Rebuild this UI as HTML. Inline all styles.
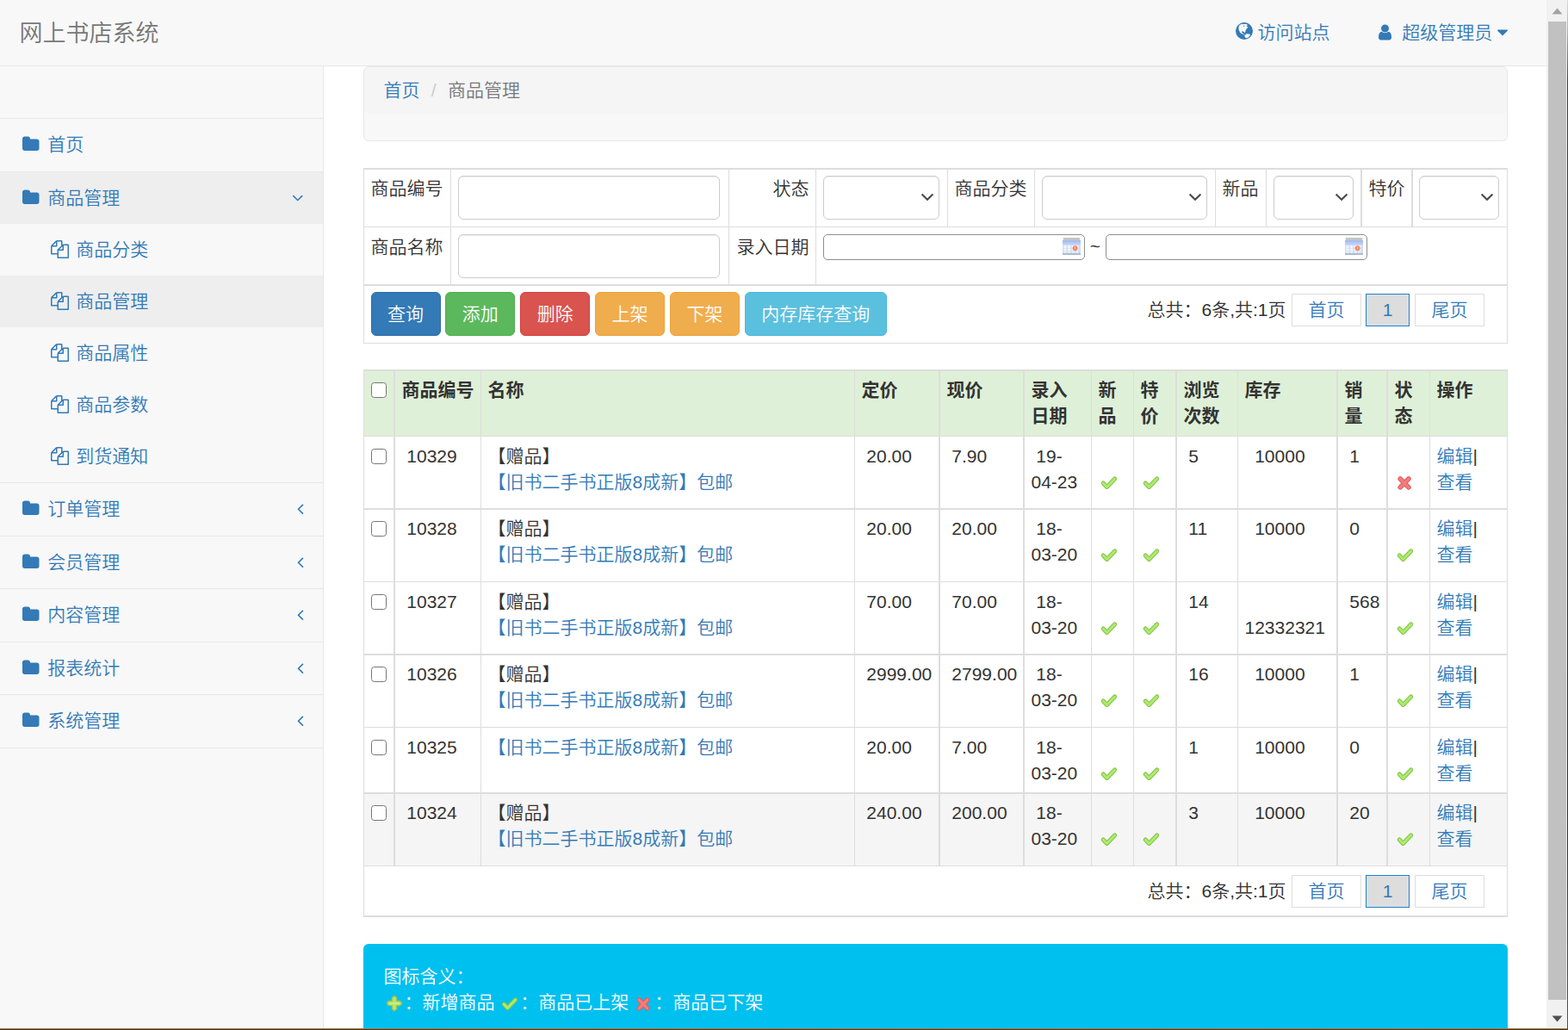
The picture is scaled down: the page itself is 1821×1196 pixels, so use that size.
<!DOCTYPE html>
<html lang="zh-CN">
<head>
<meta charset="utf-8">
<title>网上书店系统</title>
<style>
*{box-sizing:border-box}
html,body{margin:0;padding:0}
body{width:1821px;height:1196px;overflow:hidden;position:relative;background:#fff;
 font-family:"Liberation Sans","Noto Sans CJK SC",sans-serif;font-weight:350}
#vp{position:absolute;left:0;top:0;width:1796px;height:1194px;overflow:hidden;background:#fff}
#z{zoom:1.5;width:1197.3333px;position:relative;font-size:14px;line-height:20px;color:#333;--d:0.6666667px}
a{color:#337ab7;text-decoration:none}
svg.fa{display:inline-block;vertical-align:-2px}
.fw{display:inline-block;width:18px;text-align:center}
/* scrollbar + edges */
#sb{position:absolute;left:1796px;top:0;width:24px;height:1194px;background:#f1f1f1}
#sb .th{position:absolute;left:2px;top:25px;width:21px;height:1136px;background:#c1c1c1}
#sb svg{position:absolute;left:0}
#edgeR{position:absolute;left:1820px;top:0;width:1px;height:1196px;background:linear-gradient(#c9dcec 0,#8fb6d6 3%,#3d3a3a 8%,#2a2522 50%,#3a2a1a 80%,#7a4a12 100%)}
#edgeB{position:absolute;left:0;top:1194px;width:1821px;height:2px;background:linear-gradient(#b9a58a 0,#5d3a0e 60%,#4a2c08 100%)}
/* navbar */
#nav{height:51px;background:#f8f8f8;position:relative}
#navb{position:absolute;left:0;top:76px;width:1796px;height:1px;background:#e7e7e7}
#brand{position:absolute;left:15px;top:15.667px;font-size:18px;line-height:20px;color:#777}
#toplinks{position:absolute;right:15px;top:0;margin:0;padding:0;list-style:none;white-space:nowrap}
#toplinks li{display:inline-block;vertical-align:top}
#toplinks a{display:block;padding:15px;min-height:50px;line-height:20px}
/* sidebar */
#side{position:absolute;left:0;top:51px;width:250px;background:#f8f8f8;height:760px}
#side ul{list-style:none;margin:0;padding:0}
#side>ul>li{height:41px;position:relative}
#side>ul>li.act{height:241px}
#side>ul>li:after{content:'';position:absolute;left:0;right:0;bottom:0;height:0.667px;background:#e7e7e7}
#side a{display:block;padding:10px 15px;position:relative}
#side li.search{height:41px;padding:0}
#side .act>a,#side a.cur{background:#eee}
#side ul ul a{padding-left:37px}
#side .arrow{float:right}
/* page (z container only paints the white bg) */
#page{margin-left:250px;padding:0 30px;background:#fff;min-height:760px}
#sideb{position:absolute;left:375px;top:77px;width:1px;height:1120px;background:#e7e7e7}
/* device-pixel layer */
#pg{position:absolute;left:0;top:0;width:1796px;height:1194px;overflow:hidden;font-size:21px;line-height:30px;color:#333}
#pg a{color:#337ab7}
#crumbbox{position:absolute;left:422px;top:77px;width:1329px;height:87px;border:1px solid #e7e7e7;background:#f8f8f8;border-radius:6px}
#crumb{margin:0;padding:12px 22.5px;height:54px;list-style:none;background:#f5f5f5;border-radius:5px}
#crumb li{display:inline-block}
#crumb li+li:before{content:"/\00a0";padding:0 7.5px;color:#ccc}
#crumb .on{color:#777}
#pg table{position:absolute;left:422px;border-collapse:separate;border-spacing:0;table-layout:fixed;width:1329px}
#pg td,#pg th{border:0 solid #ddd;padding:7.5px 7.5px 0;vertical-align:top;text-align:left;font-weight:inherit;white-space:nowrap}
/* filter */
#flt{top:195px}
#flt td.r{text-align:right}
.ipt{display:inline-block;height:51px;border:1px solid #ccc;border-radius:6px;background:#fff;box-shadow:inset 0 1px 1px rgba(0,0,0,.075);vertical-align:top}
.sel{position:relative}
.sel svg{position:absolute;right:5px;top:19px}
.wdate{display:inline-block;height:30px;width:304px;border:1px solid #8e8e8e;border-radius:5px;background:#fff;vertical-align:top;position:relative}
.wdate svg{position:absolute;right:4px;top:3px}
.btn{display:inline-block;height:51px;padding:9.5px 18.5px;border:1px solid transparent;border-radius:6px;color:#fff;line-height:30px;vertical-align:top}
.b1{background:#337ab7;border-color:#2e6da4}.b2{background:#5cb85c;border-color:#4cae4c}.b3{background:#d9534f;border-color:#d43f3a}
.b4{background:#f0ad4e;border-color:#eea236}.b5{background:#5bc0de;border-color:#46b8da}
.pager{float:right;margin-right:18.5px;margin-top:2px;white-space:nowrap;font-size:0}
.pager span.t{display:inline-block;vertical-align:top;line-height:37px;font-size:21px;margin-right:6.5px}
.pager a{display:inline-block;vertical-align:top;height:38px;line-height:36px;border:1px solid #ddd;width:81px;text-align:center;background:#fff;font-size:21px}
.pager a.on{background:#ddd;border-color:#1e82d2;width:51px;margin:0 6px 0 5px}
/* main table */
#main{top:429px}
#main th{background:#dff0d8;font-weight:bold}
#main tr.hov td{background:#f5f5f5}
.cb{display:inline-block;width:18px;height:18px;border:1.3px solid #767676;border-radius:3.5px;background:#fff;margin:6px 0 0 0.5px;vertical-align:top}
.ic{display:inline-block;vertical-align:-5px}
/* alert */
.alert{position:absolute;left:422px;top:1095.5px;background:#00c0ef;border-radius:6px;color:#fff;padding:23px 23.5px;height:180px;width:1329px}
.alert .ic{vertical-align:-6px}

</style>
</head>
<body>
<div id="vp"><div id="z">

<div id="nav">
  <div id="brand">网上书店系统</div>
  <ul id="toplinks">
    <li><a><svg class="fa" width="13.3333" height="13.3333" viewBox="128 128 1536 1536" style="vertical-align:-0.7px;margin-left:-1.55px;margin-right:0.05px"><circle cx="896" cy="896" r="768" fill="currentColor"/><polygon fill="#f8f8f8" stroke="#f8f8f8" stroke-width="14" stroke-linejoin="round" points="478,362 676,290 1120,290 1180,376 1093,480 1243,572 1104,676 1012,861 965,1046 861,977 722,931 653,1000 815,1139 954,1278 861,1231 561,1069 422,815 399,584"/><polygon fill="#f8f8f8" stroke="#f8f8f8" stroke-width="14" stroke-linejoin="round" points="954,1278 1093,1150 1310,1170 1440,1215 1350,1385 1185,1510 1056,1510 941,1406"/><circle cx="870" cy="450" r="50" fill="currentColor"/><circle cx="745" cy="975" r="50" fill="currentColor"/></svg> 访问站点</a></li>
    <li><a><span class="fw"><svg class="fa" width="10.000" height="14" viewBox="256 0 1280 1792" style=""><path fill="currentColor" d="M1536 1399q0 109-62.5 187t-150.5 78h-854q-88 0-150.5-78t-62.5-187q0-85 8.500-160.500t31.500-152 58.500-131 94-89 134.500-34.500q131 128 313 128t313-128q76 0 134.500 34.500t94 89 58.500 131 31.500 152 8.500 160.500zm-256-887q0 159-112.500 271.500t-271.500 112.500-271.500-112.500-112.500-271.500 112.500-271.500 271.500-112.500 271.500 112.500 112.500 271.500z"/></svg></span> 超级管理员 <svg class="fa" width="8.000" height="14" viewBox="384 0 1024 1792" style=""><path fill="currentColor" d="M1408 704q0 26-19 45l-448 448q-19 19-45 19t-45-19l-448-448q-19-19-19-45t19-45 45-19h896q26 0 45 19t19 45z"/></svg></a></li>
  </ul>
</div>

<div id="side">
<ul>
  <li class="search"></li>
  <li><a><span class="fw"><svg class="fa" width="13.000" height="14" viewBox="64 0 1664 1792" style=""><path fill="currentColor" d="M1728 608v704q0 92-66 158t-158 66h-1216q-92 0-158-66t-66-158v-960q0-92 66-158t158-66h320q92 0 158 66t66 158v32h672q92 0 158 66t66 158z"/></svg></span> 首页</a></li>
  <li class="act"><a><span class="fw"><svg class="fa" width="13.000" height="14" viewBox="64 0 1664 1792" style=""><path fill="currentColor" d="M1728 608v704q0 92-66 158t-158 66h-1216q-92 0-158-66t-66-158v-960q0-92 66-158t158-66h320q92 0 158 66t66 158v32h672q92 0 158 66t66 158z"/></svg></span> 商品管理<span class="arrow"><svg class="fa" width="9.000" height="14" viewBox="320 0 1152 1792" style=""><path fill="currentColor" d="M1395 736q0 13-10 23l-466 466q-10 10-23 10t-23-10l-466-466q-10-10-10-23t10-23l50-50q10-10 23-10t23 10l393 393 393-393q10-10 23-10t23 10l50 50q10 10 10 23z"/></svg></span></a>
    <ul>
      <li><a><span class="fw"><svg class="fa" width="14.000" height="14" viewBox="0 0 1792 1792" style=""><path fill="currentColor" d="M1696 384q40 0 68 28t28 68v1216q0 40-28 68t-68 28h-960q-40 0-68-28t-28-68v-288h-544q-40 0-68-28t-28-68v-672q0-40 20-88t48-76l408-408q28-28 76-48t88-20h416q40 0 68 28t28 68v328q68-40 128-40h416zm-544 213l-299 299h299v-299zm-640-384l-299 299h299v-299zm196 647l316-316v-416h-384v416q0 40-28 68t-68 28h-416v640h512v-256q0-40 20-88t48-76zm956 804v-1152h-384v416q0 40-28 68t-68 28h-416v640h896z"/></svg></span> 商品分类</a></li>
      <li><a class="cur"><span class="fw"><svg class="fa" width="14.000" height="14" viewBox="0 0 1792 1792" style=""><path fill="currentColor" d="M1696 384q40 0 68 28t28 68v1216q0 40-28 68t-68 28h-960q-40 0-68-28t-28-68v-288h-544q-40 0-68-28t-28-68v-672q0-40 20-88t48-76l408-408q28-28 76-48t88-20h416q40 0 68 28t28 68v328q68-40 128-40h416zm-544 213l-299 299h299v-299zm-640-384l-299 299h299v-299zm196 647l316-316v-416h-384v416q0 40-28 68t-68 28h-416v640h512v-256q0-40 20-88t48-76zm956 804v-1152h-384v416q0 40-28 68t-68 28h-416v640h896z"/></svg></span> 商品管理</a></li>
      <li><a><span class="fw"><svg class="fa" width="14.000" height="14" viewBox="0 0 1792 1792" style=""><path fill="currentColor" d="M1696 384q40 0 68 28t28 68v1216q0 40-28 68t-68 28h-960q-40 0-68-28t-28-68v-288h-544q-40 0-68-28t-28-68v-672q0-40 20-88t48-76l408-408q28-28 76-48t88-20h416q40 0 68 28t28 68v328q68-40 128-40h416zm-544 213l-299 299h299v-299zm-640-384l-299 299h299v-299zm196 647l316-316v-416h-384v416q0 40-28 68t-68 28h-416v640h512v-256q0-40 20-88t48-76zm956 804v-1152h-384v416q0 40-28 68t-68 28h-416v640h896z"/></svg></span> 商品属性</a></li>
      <li><a><span class="fw"><svg class="fa" width="14.000" height="14" viewBox="0 0 1792 1792" style=""><path fill="currentColor" d="M1696 384q40 0 68 28t28 68v1216q0 40-28 68t-68 28h-960q-40 0-68-28t-28-68v-288h-544q-40 0-68-28t-28-68v-672q0-40 20-88t48-76l408-408q28-28 76-48t88-20h416q40 0 68 28t28 68v328q68-40 128-40h416zm-544 213l-299 299h299v-299zm-640-384l-299 299h299v-299zm196 647l316-316v-416h-384v416q0 40-28 68t-68 28h-416v640h512v-256q0-40 20-88t48-76zm956 804v-1152h-384v416q0 40-28 68t-68 28h-416v640h896z"/></svg></span> 商品参数</a></li>
      <li><a><span class="fw"><svg class="fa" width="14.000" height="14" viewBox="0 0 1792 1792" style=""><path fill="currentColor" d="M1696 384q40 0 68 28t28 68v1216q0 40-28 68t-68 28h-960q-40 0-68-28t-28-68v-288h-544q-40 0-68-28t-28-68v-672q0-40 20-88t48-76l408-408q28-28 76-48t88-20h416q40 0 68 28t28 68v328q68-40 128-40h416zm-544 213l-299 299h299v-299zm-640-384l-299 299h299v-299zm196 647l316-316v-416h-384v416q0 40-28 68t-68 28h-416v640h512v-256q0-40 20-88t48-76zm956 804v-1152h-384v416q0 40-28 68t-68 28h-416v640h896z"/></svg></span> 到货通知</a></li>
    </ul>
  </li>
  <li><a><span class="fw"><svg class="fa" width="13.000" height="14" viewBox="64 0 1664 1792" style=""><path fill="currentColor" d="M1728 608v704q0 92-66 158t-158 66h-1216q-92 0-158-66t-66-158v-960q0-92 66-158t158-66h320q92 0 158 66t66 158v32h672q92 0 158 66t66 158z"/></svg></span> 订单管理<span class="arrow"><svg class="fa" width="5.000" height="14" viewBox="576 0 640 1792" style=""><path fill="currentColor" d="M1203 544q0 13-10 23l-393 393 393 393q10 10 10 23t-10 23l-50 50q-10 10-23 10t-23-10l-466-466q-10-10-10-23t10-23l466-466q10-10 23-10t23 10l50 50q10 10 10 23z"/></svg></span></a></li>
  <li><a><span class="fw"><svg class="fa" width="13.000" height="14" viewBox="64 0 1664 1792" style=""><path fill="currentColor" d="M1728 608v704q0 92-66 158t-158 66h-1216q-92 0-158-66t-66-158v-960q0-92 66-158t158-66h320q92 0 158 66t66 158v32h672q92 0 158 66t66 158z"/></svg></span> 会员管理<span class="arrow"><svg class="fa" width="5.000" height="14" viewBox="576 0 640 1792" style=""><path fill="currentColor" d="M1203 544q0 13-10 23l-393 393 393 393q10 10 10 23t-10 23l-50 50q-10 10-23 10t-23-10l-466-466q-10-10-10-23t10-23l466-466q10-10 23-10t23 10l50 50q10 10 10 23z"/></svg></span></a></li>
  <li><a><span class="fw"><svg class="fa" width="13.000" height="14" viewBox="64 0 1664 1792" style=""><path fill="currentColor" d="M1728 608v704q0 92-66 158t-158 66h-1216q-92 0-158-66t-66-158v-960q0-92 66-158t158-66h320q92 0 158 66t66 158v32h672q92 0 158 66t66 158z"/></svg></span> 内容管理<span class="arrow"><svg class="fa" width="5.000" height="14" viewBox="576 0 640 1792" style=""><path fill="currentColor" d="M1203 544q0 13-10 23l-393 393 393 393q10 10 10 23t-10 23l-50 50q-10 10-23 10t-23-10l-466-466q-10-10-10-23t10-23l466-466q10-10 23-10t23 10l50 50q10 10 10 23z"/></svg></span></a></li>
  <li><a><span class="fw"><svg class="fa" width="13.000" height="14" viewBox="64 0 1664 1792" style=""><path fill="currentColor" d="M1728 608v704q0 92-66 158t-158 66h-1216q-92 0-158-66t-66-158v-960q0-92 66-158t158-66h320q92 0 158 66t66 158v32h672q92 0 158 66t66 158z"/></svg></span> 报表统计<span class="arrow"><svg class="fa" width="5.000" height="14" viewBox="576 0 640 1792" style=""><path fill="currentColor" d="M1203 544q0 13-10 23l-393 393 393 393q10 10 10 23t-10 23l-50 50q-10 10-23 10t-23-10l-466-466q-10-10-10-23t10-23l466-466q10-10 23-10t23 10l50 50q10 10 10 23z"/></svg></span></a></li>
  <li><a><span class="fw"><svg class="fa" width="13.000" height="14" viewBox="64 0 1664 1792" style=""><path fill="currentColor" d="M1728 608v704q0 92-66 158t-158 66h-1216q-92 0-158-66t-66-158v-960q0-92 66-158t158-66h320q92 0 158 66t66 158v32h672q92 0 158 66t66 158z"/></svg></span> 系统管理<span class="arrow"><svg class="fa" width="5.000" height="14" viewBox="576 0 640 1792" style=""><path fill="currentColor" d="M1203 544q0 13-10 23l-393 393 393 393q10 10 10 23t-10 23l-50 50q-10 10-23 10t-23-10l-466-466q-10-10-10-23t10-23l466-466q10-10 23-10t23 10l50 50q10 10 10 23z"/></svg></span></a></li>
</ul>
</div>

<div id="page"></div>
</div></div>
<div id="sideb"></div><div id="navb"></div>

<div id="pg">
  <div id="crumbbox"><ol id="crumb"><li><a>首页</a></li> <li class="on">商品管理</li></ol></div>

  <table id="flt">
    <colgroup><col style="width:101px"><col style="width:323px"><col style="width:101px"><col style="width:153px"><col style="width:101px"><col style="width:210px"><col style="width:59px"><col style="width:110px"><col style="width:59px"><col style="width:112px"></colgroup>
    <tr style="height:68px">
      <td style="border-top-width:2px;border-left-width:1px;padding-top:7px;padding-left:7.5px;">商品编号</td><td style="border-top-width:2px;border-left-width:1px;padding-top:7px;padding-left:8px;"><span class="ipt" style="width:304px"></span></td>
      <td class="r" style="border-top-width:2px;border-left-width:1px;padding-top:7px;padding-left:7.5px;">状态</td><td style="border-top-width:2px;border-left-width:1px;padding-top:7px;padding-left:8px;"><span class="ipt sel" style="width:135px;margin-left:0px"><svg width="16" height="10" viewBox="0 0 16 10"><path d="M1.6 1.4 L8 7.8 L14.4 1.4" fill="none" stroke="#4a4a4a" stroke-width="2.1"/></svg></span></td>
      <td style="border-top-width:2px;border-left-width:1px;padding-top:7px;padding-left:7.5px;">商品分类</td><td style="border-top-width:2px;border-left-width:1px;padding-top:7px;padding-left:8px;"><span class="ipt sel" style="width:192px;margin-left:0px"><svg width="16" height="10" viewBox="0 0 16 10"><path d="M1.6 1.4 L8 7.8 L14.4 1.4" fill="none" stroke="#4a4a4a" stroke-width="2.1"/></svg></span></td>
      <td style="border-top-width:2px;border-left-width:1px;padding-top:7px;padding-left:7.5px;">新品</td><td style="border-top-width:2px;border-left-width:1px;padding-top:7px;padding-left:8px;"><span class="ipt sel" style="width:93px;margin-left:0px"><svg width="16" height="10" viewBox="0 0 16 10"><path d="M1.6 1.4 L8 7.8 L14.4 1.4" fill="none" stroke="#4a4a4a" stroke-width="2.1"/></svg></span></td>
      <td style="border-top-width:2px;border-left-width:2px;padding-top:7px;padding-left:7.5px;">特价</td><td style="border-top-width:2px;border-left-width:2px;padding-top:7px;padding-left:7px;border-right-width:1px;"><span class="ipt sel" style="width:93px;margin-left:0px"><svg width="16" height="10" viewBox="0 0 16 10"><path d="M1.6 1.4 L8 7.8 L14.4 1.4" fill="none" stroke="#4a4a4a" stroke-width="2.1"/></svg></span></td>
    </tr>
    <tr style="height:67px">
      <td style="border-top-width:1px;border-left-width:1px;padding-top:7.5px;padding-left:7.5px;">商品名称</td><td style="border-top-width:1px;border-left-width:1px;padding-top:8px;padding-left:8px;"><span class="ipt" style="width:304px"></span></td>
      <td class="r" style="border-top-width:1px;border-left-width:1px;padding-top:7.5px;padding-left:7.5px;">录入日期</td><td colspan="7" style="border-top-width:1px;border-left-width:1px;padding-top:8px;padding-left:8px;border-right-width:1px;"><span class="wdate"><svg width="21" height="20" viewBox="0 0 21 20"><rect x="0.8" y="0" width="19.4" height="3.2" fill="#c3c5c9"/><rect x="0" y="3" width="21" height="5.5" fill="#a9bdf0"/><rect x="0" y="5.5" width="21" height="3" fill="#bccdf5"/><rect x="0" y="8.2" width="21" height="10" fill="#d3dff1"/><rect x="1.5" y="9.2" width="3" height="2.6" fill="#f4f8fd"/><rect x="6.1" y="9.2" width="3" height="2.6" fill="#f4f8fd"/><rect x="10.7" y="9.2" width="3" height="2.6" fill="#f4f8fd"/><rect x="15.3" y="9.2" width="3" height="2.6" fill="#f4f8fd"/><rect x="1.5" y="12.7" width="3" height="2.6" fill="#f4f8fd"/><rect x="6.1" y="12.7" width="3" height="2.6" fill="#f4f8fd"/><rect x="10.7" y="12.7" width="3" height="2.6" fill="#f4f8fd"/><rect x="15.3" y="12.7" width="3" height="2.6" fill="#f4f8fd"/><rect x="1.5" y="16.2" width="3" height="2.6" fill="#f4f8fd"/><rect x="6.1" y="16.2" width="3" height="2.6" fill="#f4f8fd"/><rect x="10.7" y="16.2" width="3" height="2.6" fill="#f4f8fd"/><rect x="15.3" y="16.2" width="3" height="2.6" fill="#f4f8fd"/><rect x="0" y="17.8" width="21" height="2.2" fill="#adbcd4"/><circle cx="14.6" cy="12.2" r="3" fill="#ef8a6c"/><rect x="14.2" y="10.6" width="0.9" height="2.6" fill="#f8d8cc"/></svg></span> <span style="position:relative;top:-1.5px">~</span> <span class="wdate"><svg width="21" height="20" viewBox="0 0 21 20"><rect x="0.8" y="0" width="19.4" height="3.2" fill="#c3c5c9"/><rect x="0" y="3" width="21" height="5.5" fill="#a9bdf0"/><rect x="0" y="5.5" width="21" height="3" fill="#bccdf5"/><rect x="0" y="8.2" width="21" height="10" fill="#d3dff1"/><rect x="1.5" y="9.2" width="3" height="2.6" fill="#f4f8fd"/><rect x="6.1" y="9.2" width="3" height="2.6" fill="#f4f8fd"/><rect x="10.7" y="9.2" width="3" height="2.6" fill="#f4f8fd"/><rect x="15.3" y="9.2" width="3" height="2.6" fill="#f4f8fd"/><rect x="1.5" y="12.7" width="3" height="2.6" fill="#f4f8fd"/><rect x="6.1" y="12.7" width="3" height="2.6" fill="#f4f8fd"/><rect x="10.7" y="12.7" width="3" height="2.6" fill="#f4f8fd"/><rect x="15.3" y="12.7" width="3" height="2.6" fill="#f4f8fd"/><rect x="1.5" y="16.2" width="3" height="2.6" fill="#f4f8fd"/><rect x="6.1" y="16.2" width="3" height="2.6" fill="#f4f8fd"/><rect x="10.7" y="16.2" width="3" height="2.6" fill="#f4f8fd"/><rect x="15.3" y="16.2" width="3" height="2.6" fill="#f4f8fd"/><rect x="0" y="17.8" width="21" height="2.2" fill="#adbcd4"/><circle cx="14.6" cy="12.2" r="3" fill="#ef8a6c"/><rect x="14.2" y="10.6" width="0.9" height="2.6" fill="#f8d8cc"/></svg></span></td>
    </tr>
    <tr style="height:69px">
      <td colspan="10" style="border-top-width:2px;border-left-width:1px;padding-top:7px;padding-left:7.5px;border-right-width:1px;border-bottom-width:1px;"><span class="btn b1">查询</span> <span class="btn b2">添加</span> <span class="btn b3">删除</span> <span class="btn b4">上架</span> <span class="btn b4">下架</span> <span class="btn b5">内存库存查询</span><span class="pager"><span class="t">总共：6条,共:1页</span> <a>首页</a> <a class="on">1</a> <a>尾页</a></span></td>
    </tr>
  </table>

  <table id="main">
    <colgroup><col style="width:35px"><col style="width:101px"><col style="width:434px"><col style="width:98px"><col style="width:98px"><col style="width:79px"><col style="width:49px"><col style="width:49px"><col style="width:72px"><col style="width:115px"><col style="width:58px"><col style="width:50px"><col style="width:91px"></colgroup>
    <tr class="h" style="height:77px"><th style="border-top-width:2px;border-left-width:1px;padding-top:7px;"><span class="cb"></span></th><th style="border-top-width:2px;border-left-width:2px;padding-top:7px;">商品编号</th><th style="border-top-width:2px;border-left-width:1px;padding-top:7px;">名称</th><th style="border-top-width:2px;border-left-width:1px;padding-top:7px;">定价</th><th style="border-top-width:2px;border-left-width:2px;padding-top:7px;">现价</th><th style="border-top-width:2px;border-left-width:2px;padding-top:7px;">录入<br>日期</th><th style="border-top-width:2px;border-left-width:1px;padding-top:7px;">新<br>品</th><th style="border-top-width:2px;border-left-width:1px;padding-top:7px;">特<br>价</th><th style="border-top-width:2px;border-left-width:2px;padding-top:7px;">浏览<br>次数</th><th style="border-top-width:2px;border-left-width:1px;padding-top:7px;">库存</th><th style="border-top-width:2px;border-left-width:2px;padding-top:7px;">销<br>量</th><th style="border-top-width:2px;border-left-width:2px;padding-top:7px;">状<br>态</th><th style="border-top-width:2px;border-left-width:1px;padding-top:7px;border-right:1px solid #ddd;">操作</th></tr>
    <tr class="" style="height:84px"><td style="border-top-width:1px;border-left-width:1px;padding-top:7.5px;"><span class="cb"></span></td><td style="border-top-width:1px;border-left-width:2px;padding-top:7.5px;">&nbsp;10329</td><td style="border-top-width:1px;border-left-width:1px;padding-top:7.5px;">【赠品】<br><a>【旧书二手书正版8成新】包邮</a></td><td style="border-top-width:1px;border-left-width:1px;padding-top:7.5px;">&nbsp;20.00</td><td style="border-top-width:1px;border-left-width:2px;padding-top:7.5px;">&nbsp;7.90</td><td style="border-top-width:1px;border-left-width:2px;padding-top:7.5px;">&nbsp;19-<br>04-23</td><td style="border-top-width:1px;border-left-width:1px;padding-top:7.5px;">&nbsp;<br><svg class="ic" width="24" height="24" viewBox="0 0 16 16"><path d="M3.5 8.7 L6.3 11.6 L12.4 5.3" fill="none" stroke="#86c64a" stroke-width="3.4" stroke-linecap="round" stroke-linejoin="round"/><path d="M3.5 8.7 L6.3 11.6 L12.4 5.3" fill="none" stroke="#aeea70" stroke-width="1.9" stroke-linecap="round" stroke-linejoin="round"/></svg></td><td style="border-top-width:1px;border-left-width:1px;padding-top:7.5px;">&nbsp;<br><svg class="ic" width="24" height="24" viewBox="0 0 16 16"><path d="M3.5 8.7 L6.3 11.6 L12.4 5.3" fill="none" stroke="#86c64a" stroke-width="3.4" stroke-linecap="round" stroke-linejoin="round"/><path d="M3.5 8.7 L6.3 11.6 L12.4 5.3" fill="none" stroke="#aeea70" stroke-width="1.9" stroke-linecap="round" stroke-linejoin="round"/></svg></td><td style="border-top-width:1px;border-left-width:2px;padding-top:7.5px;">&nbsp;5</td><td style="border-top-width:1px;border-left-width:1px;padding-top:7.5px;">&nbsp;&nbsp;10000</td><td style="border-top-width:1px;border-left-width:2px;padding-top:7.5px;">&nbsp;1</td><td style="border-top-width:1px;border-left-width:2px;padding-top:7.5px;">&nbsp;<br><svg class="ic" width="24" height="24" viewBox="0 0 16 16"><path d="M4.1 5.3 L10.6 11.9 M10.6 5.3 L4.1 11.9" fill="none" stroke="#dc5c5c" stroke-width="3.7" stroke-linecap="round"/><path d="M4.1 5.3 L10.6 11.9 M10.6 5.3 L4.1 11.9" fill="none" stroke="#f47c7c" stroke-width="2.3" stroke-linecap="round"/></svg></td><td style="border-top-width:1px;border-left-width:1px;padding-top:7.5px;border-right:1px solid #ddd;"><a>编辑</a>|<br><a>查看</a></td></tr>
    <tr class="" style="height:85px"><td style="border-top-width:2px;border-left-width:1px;padding-top:7px;"><span class="cb"></span></td><td style="border-top-width:2px;border-left-width:2px;padding-top:7px;">&nbsp;10328</td><td style="border-top-width:2px;border-left-width:1px;padding-top:7px;">【赠品】<br><a>【旧书二手书正版8成新】包邮</a></td><td style="border-top-width:2px;border-left-width:1px;padding-top:7px;">&nbsp;20.00</td><td style="border-top-width:2px;border-left-width:2px;padding-top:7px;">&nbsp;20.00</td><td style="border-top-width:2px;border-left-width:2px;padding-top:7px;">&nbsp;18-<br>03-20</td><td style="border-top-width:2px;border-left-width:1px;padding-top:7px;">&nbsp;<br><svg class="ic" width="24" height="24" viewBox="0 0 16 16"><path d="M3.5 8.7 L6.3 11.6 L12.4 5.3" fill="none" stroke="#86c64a" stroke-width="3.4" stroke-linecap="round" stroke-linejoin="round"/><path d="M3.5 8.7 L6.3 11.6 L12.4 5.3" fill="none" stroke="#aeea70" stroke-width="1.9" stroke-linecap="round" stroke-linejoin="round"/></svg></td><td style="border-top-width:2px;border-left-width:1px;padding-top:7px;">&nbsp;<br><svg class="ic" width="24" height="24" viewBox="0 0 16 16"><path d="M3.5 8.7 L6.3 11.6 L12.4 5.3" fill="none" stroke="#86c64a" stroke-width="3.4" stroke-linecap="round" stroke-linejoin="round"/><path d="M3.5 8.7 L6.3 11.6 L12.4 5.3" fill="none" stroke="#aeea70" stroke-width="1.9" stroke-linecap="round" stroke-linejoin="round"/></svg></td><td style="border-top-width:2px;border-left-width:2px;padding-top:7px;">&nbsp;11</td><td style="border-top-width:2px;border-left-width:1px;padding-top:7px;">&nbsp;&nbsp;10000</td><td style="border-top-width:2px;border-left-width:2px;padding-top:7px;">&nbsp;0</td><td style="border-top-width:2px;border-left-width:2px;padding-top:7px;">&nbsp;<br><svg class="ic" width="24" height="24" viewBox="0 0 16 16"><path d="M3.5 8.7 L6.3 11.6 L12.4 5.3" fill="none" stroke="#86c64a" stroke-width="3.4" stroke-linecap="round" stroke-linejoin="round"/><path d="M3.5 8.7 L6.3 11.6 L12.4 5.3" fill="none" stroke="#aeea70" stroke-width="1.9" stroke-linecap="round" stroke-linejoin="round"/></svg></td><td style="border-top-width:2px;border-left-width:1px;padding-top:7px;border-right:1px solid #ddd;"><a>编辑</a>|<br><a>查看</a></td></tr>
    <tr class="" style="height:84px"><td style="border-top-width:1px;border-left-width:1px;padding-top:7.5px;"><span class="cb"></span></td><td style="border-top-width:1px;border-left-width:2px;padding-top:7.5px;">&nbsp;10327</td><td style="border-top-width:1px;border-left-width:1px;padding-top:7.5px;">【赠品】<br><a>【旧书二手书正版8成新】包邮</a></td><td style="border-top-width:1px;border-left-width:1px;padding-top:7.5px;">&nbsp;70.00</td><td style="border-top-width:1px;border-left-width:2px;padding-top:7.5px;">&nbsp;70.00</td><td style="border-top-width:1px;border-left-width:2px;padding-top:7.5px;">&nbsp;18-<br>03-20</td><td style="border-top-width:1px;border-left-width:1px;padding-top:7.5px;">&nbsp;<br><svg class="ic" width="24" height="24" viewBox="0 0 16 16"><path d="M3.5 8.7 L6.3 11.6 L12.4 5.3" fill="none" stroke="#86c64a" stroke-width="3.4" stroke-linecap="round" stroke-linejoin="round"/><path d="M3.5 8.7 L6.3 11.6 L12.4 5.3" fill="none" stroke="#aeea70" stroke-width="1.9" stroke-linecap="round" stroke-linejoin="round"/></svg></td><td style="border-top-width:1px;border-left-width:1px;padding-top:7.5px;">&nbsp;<br><svg class="ic" width="24" height="24" viewBox="0 0 16 16"><path d="M3.5 8.7 L6.3 11.6 L12.4 5.3" fill="none" stroke="#86c64a" stroke-width="3.4" stroke-linecap="round" stroke-linejoin="round"/><path d="M3.5 8.7 L6.3 11.6 L12.4 5.3" fill="none" stroke="#aeea70" stroke-width="1.9" stroke-linecap="round" stroke-linejoin="round"/></svg></td><td style="border-top-width:1px;border-left-width:2px;padding-top:7.5px;">&nbsp;14</td><td style="border-top-width:1px;border-left-width:1px;padding-top:7.5px;">&nbsp;<br>12332321</td><td style="border-top-width:1px;border-left-width:2px;padding-top:7.5px;">&nbsp;568</td><td style="border-top-width:1px;border-left-width:2px;padding-top:7.5px;">&nbsp;<br><svg class="ic" width="24" height="24" viewBox="0 0 16 16"><path d="M3.5 8.7 L6.3 11.6 L12.4 5.3" fill="none" stroke="#86c64a" stroke-width="3.4" stroke-linecap="round" stroke-linejoin="round"/><path d="M3.5 8.7 L6.3 11.6 L12.4 5.3" fill="none" stroke="#aeea70" stroke-width="1.9" stroke-linecap="round" stroke-linejoin="round"/></svg></td><td style="border-top-width:1px;border-left-width:1px;padding-top:7.5px;border-right:1px solid #ddd;"><a>编辑</a>|<br><a>查看</a></td></tr>
    <tr class="" style="height:85px"><td style="border-top-width:2px;border-left-width:1px;padding-top:7px;"><span class="cb"></span></td><td style="border-top-width:2px;border-left-width:2px;padding-top:7px;">&nbsp;10326</td><td style="border-top-width:2px;border-left-width:1px;padding-top:7px;">【赠品】<br><a>【旧书二手书正版8成新】包邮</a></td><td style="border-top-width:2px;border-left-width:1px;padding-top:7px;">&nbsp;2999.00</td><td style="border-top-width:2px;border-left-width:2px;padding-top:7px;">&nbsp;2799.00</td><td style="border-top-width:2px;border-left-width:2px;padding-top:7px;">&nbsp;18-<br>03-20</td><td style="border-top-width:2px;border-left-width:1px;padding-top:7px;">&nbsp;<br><svg class="ic" width="24" height="24" viewBox="0 0 16 16"><path d="M3.5 8.7 L6.3 11.6 L12.4 5.3" fill="none" stroke="#86c64a" stroke-width="3.4" stroke-linecap="round" stroke-linejoin="round"/><path d="M3.5 8.7 L6.3 11.6 L12.4 5.3" fill="none" stroke="#aeea70" stroke-width="1.9" stroke-linecap="round" stroke-linejoin="round"/></svg></td><td style="border-top-width:2px;border-left-width:1px;padding-top:7px;">&nbsp;<br><svg class="ic" width="24" height="24" viewBox="0 0 16 16"><path d="M3.5 8.7 L6.3 11.6 L12.4 5.3" fill="none" stroke="#86c64a" stroke-width="3.4" stroke-linecap="round" stroke-linejoin="round"/><path d="M3.5 8.7 L6.3 11.6 L12.4 5.3" fill="none" stroke="#aeea70" stroke-width="1.9" stroke-linecap="round" stroke-linejoin="round"/></svg></td><td style="border-top-width:2px;border-left-width:2px;padding-top:7px;">&nbsp;16</td><td style="border-top-width:2px;border-left-width:1px;padding-top:7px;">&nbsp;&nbsp;10000</td><td style="border-top-width:2px;border-left-width:2px;padding-top:7px;">&nbsp;1</td><td style="border-top-width:2px;border-left-width:2px;padding-top:7px;">&nbsp;<br><svg class="ic" width="24" height="24" viewBox="0 0 16 16"><path d="M3.5 8.7 L6.3 11.6 L12.4 5.3" fill="none" stroke="#86c64a" stroke-width="3.4" stroke-linecap="round" stroke-linejoin="round"/><path d="M3.5 8.7 L6.3 11.6 L12.4 5.3" fill="none" stroke="#aeea70" stroke-width="1.9" stroke-linecap="round" stroke-linejoin="round"/></svg></td><td style="border-top-width:2px;border-left-width:1px;padding-top:7px;border-right:1px solid #ddd;"><a>编辑</a>|<br><a>查看</a></td></tr>
    <tr class="" style="height:76px"><td style="border-top-width:1px;border-left-width:1px;padding-top:7.5px;"><span class="cb"></span></td><td style="border-top-width:1px;border-left-width:2px;padding-top:7.5px;">&nbsp;10325</td><td style="border-top-width:1px;border-left-width:1px;padding-top:7.5px;"><a>【旧书二手书正版8成新】包邮</a></td><td style="border-top-width:1px;border-left-width:1px;padding-top:7.5px;">&nbsp;20.00</td><td style="border-top-width:1px;border-left-width:2px;padding-top:7.5px;">&nbsp;7.00</td><td style="border-top-width:1px;border-left-width:2px;padding-top:7.5px;">&nbsp;18-<br>03-20</td><td style="border-top-width:1px;border-left-width:1px;padding-top:7.5px;">&nbsp;<br><svg class="ic" width="24" height="24" viewBox="0 0 16 16"><path d="M3.5 8.7 L6.3 11.6 L12.4 5.3" fill="none" stroke="#86c64a" stroke-width="3.4" stroke-linecap="round" stroke-linejoin="round"/><path d="M3.5 8.7 L6.3 11.6 L12.4 5.3" fill="none" stroke="#aeea70" stroke-width="1.9" stroke-linecap="round" stroke-linejoin="round"/></svg></td><td style="border-top-width:1px;border-left-width:1px;padding-top:7.5px;">&nbsp;<br><svg class="ic" width="24" height="24" viewBox="0 0 16 16"><path d="M3.5 8.7 L6.3 11.6 L12.4 5.3" fill="none" stroke="#86c64a" stroke-width="3.4" stroke-linecap="round" stroke-linejoin="round"/><path d="M3.5 8.7 L6.3 11.6 L12.4 5.3" fill="none" stroke="#aeea70" stroke-width="1.9" stroke-linecap="round" stroke-linejoin="round"/></svg></td><td style="border-top-width:1px;border-left-width:2px;padding-top:7.5px;">&nbsp;1</td><td style="border-top-width:1px;border-left-width:1px;padding-top:7.5px;">&nbsp;&nbsp;10000</td><td style="border-top-width:1px;border-left-width:2px;padding-top:7.5px;">&nbsp;0</td><td style="border-top-width:1px;border-left-width:2px;padding-top:7.5px;">&nbsp;<br><svg class="ic" width="24" height="24" viewBox="0 0 16 16"><path d="M3.5 8.7 L6.3 11.6 L12.4 5.3" fill="none" stroke="#86c64a" stroke-width="3.4" stroke-linecap="round" stroke-linejoin="round"/><path d="M3.5 8.7 L6.3 11.6 L12.4 5.3" fill="none" stroke="#aeea70" stroke-width="1.9" stroke-linecap="round" stroke-linejoin="round"/></svg></td><td style="border-top-width:1px;border-left-width:1px;padding-top:7.5px;border-right:1px solid #ddd;"><a>编辑</a>|<br><a>查看</a></td></tr>
    <tr class="hov" style="height:85px"><td style="border-top-width:2px;border-left-width:1px;padding-top:7px;"><span class="cb"></span></td><td style="border-top-width:2px;border-left-width:2px;padding-top:7px;">&nbsp;10324</td><td style="border-top-width:2px;border-left-width:1px;padding-top:7px;">【赠品】<br><a>【旧书二手书正版8成新】包邮</a></td><td style="border-top-width:2px;border-left-width:1px;padding-top:7px;">&nbsp;240.00</td><td style="border-top-width:2px;border-left-width:2px;padding-top:7px;">&nbsp;200.00</td><td style="border-top-width:2px;border-left-width:2px;padding-top:7px;">&nbsp;18-<br>03-20</td><td style="border-top-width:2px;border-left-width:1px;padding-top:7px;">&nbsp;<br><svg class="ic" width="24" height="24" viewBox="0 0 16 16"><path d="M3.5 8.7 L6.3 11.6 L12.4 5.3" fill="none" stroke="#86c64a" stroke-width="3.4" stroke-linecap="round" stroke-linejoin="round"/><path d="M3.5 8.7 L6.3 11.6 L12.4 5.3" fill="none" stroke="#aeea70" stroke-width="1.9" stroke-linecap="round" stroke-linejoin="round"/></svg></td><td style="border-top-width:2px;border-left-width:1px;padding-top:7px;">&nbsp;<br><svg class="ic" width="24" height="24" viewBox="0 0 16 16"><path d="M3.5 8.7 L6.3 11.6 L12.4 5.3" fill="none" stroke="#86c64a" stroke-width="3.4" stroke-linecap="round" stroke-linejoin="round"/><path d="M3.5 8.7 L6.3 11.6 L12.4 5.3" fill="none" stroke="#aeea70" stroke-width="1.9" stroke-linecap="round" stroke-linejoin="round"/></svg></td><td style="border-top-width:2px;border-left-width:2px;padding-top:7px;">&nbsp;3</td><td style="border-top-width:2px;border-left-width:1px;padding-top:7px;">&nbsp;&nbsp;10000</td><td style="border-top-width:2px;border-left-width:2px;padding-top:7px;">&nbsp;20</td><td style="border-top-width:2px;border-left-width:2px;padding-top:7px;">&nbsp;<br><svg class="ic" width="24" height="24" viewBox="0 0 16 16"><path d="M3.5 8.7 L6.3 11.6 L12.4 5.3" fill="none" stroke="#86c64a" stroke-width="3.4" stroke-linecap="round" stroke-linejoin="round"/><path d="M3.5 8.7 L6.3 11.6 L12.4 5.3" fill="none" stroke="#aeea70" stroke-width="1.9" stroke-linecap="round" stroke-linejoin="round"/></svg></td><td style="border-top-width:2px;border-left-width:1px;padding-top:7px;border-right:1px solid #ddd;"><a>编辑</a>|<br><a>查看</a></td></tr>
    <tr style="height:60px"><td colspan="13" style="border-width:1px 1px 2px 1px;padding-top:7.5px"><span class="pager"><span class="t">总共：6条,共:1页</span> <a>首页</a> <a class="on">1</a> <a>尾页</a></span></td></tr>
  </table>

  <div class="alert">图标含义：<br><svg class="ic" width="24" height="24" viewBox="0 0 16 16"><path d="M8 2.3 L9.7 3.6 V6.3 H12.4 L13.8 8 L12.4 9.7 H9.7 V12.4 L8 13.8 L6.3 12.4 V9.7 H3.6 L2.2 8 L3.6 6.3 H6.3 V3.6Z" fill="#b2ea6c" stroke="#a4c254" stroke-width="0.9" stroke-linejoin="round"/><path d="M4 8H12" stroke="#cdf08e" stroke-width="1"/></svg>：新增商品 <svg class="ic" width="24" height="24" viewBox="0 0 16 16"><path d="M3.5 8.7 L6.3 11.6 L12.4 5.3" fill="none" stroke="#86c64a" stroke-width="3.4" stroke-linecap="round" stroke-linejoin="round"/><path d="M3.5 8.7 L6.3 11.6 L12.4 5.3" fill="none" stroke="#aeea70" stroke-width="1.9" stroke-linecap="round" stroke-linejoin="round"/></svg>：商品已上架 <svg class="ic" width="24" height="24" viewBox="0 0 16 16"><path d="M4.1 5.3 L10.6 11.9 M10.6 5.3 L4.1 11.9" fill="none" stroke="#dc5c5c" stroke-width="3.7" stroke-linecap="round"/><path d="M4.1 5.3 L10.6 11.9 M10.6 5.3 L4.1 11.9" fill="none" stroke="#f47c7c" stroke-width="2.3" stroke-linecap="round"/></svg>：商品已下架</div>
</div>

<div id="sb"><div class="th"></div>
<svg style="top:0" width="24" height="25" viewBox="0 0 24 25"><path d="M6.5 16.5 L12.5 9.5 L18.5 16.5Z" fill="#a3a3a3"/></svg>
<svg style="top:1169px" width="24" height="25" viewBox="0 0 24 25"><path d="M6.5 10.5 L18.5 10.5 L12.5 17.5Z" fill="#505050"/></svg>
</div>
<div id="edgeB"></div><div id="edgeR"></div>

</body>
</html>
